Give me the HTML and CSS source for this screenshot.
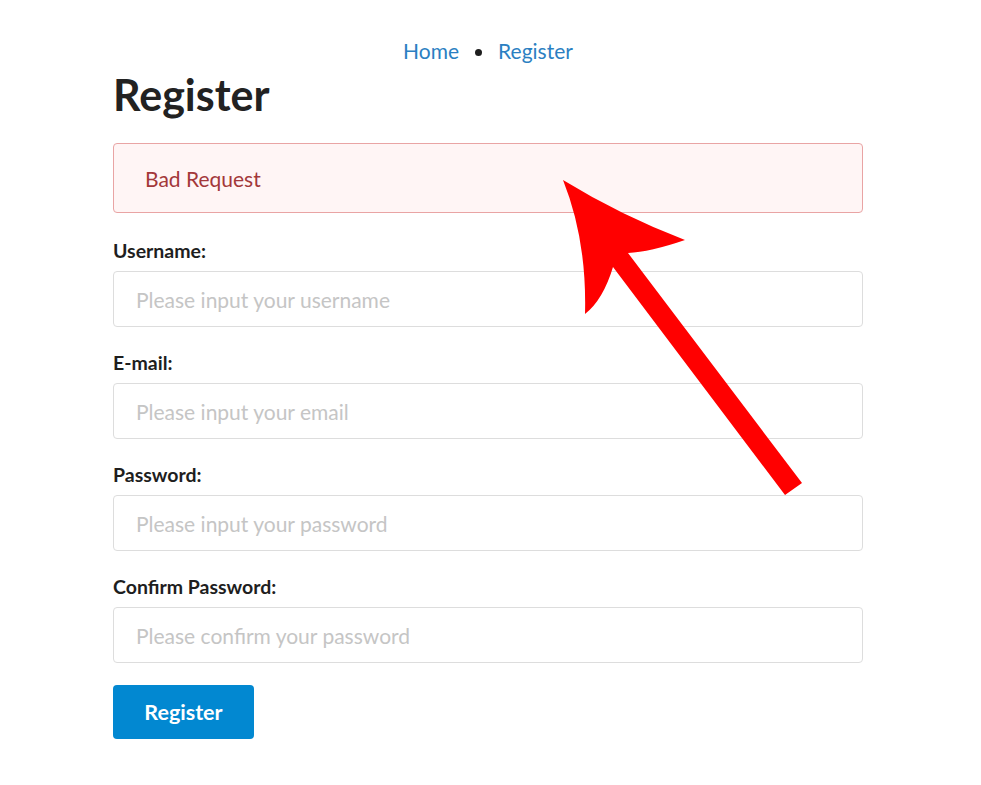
FILE: index.html
```html
<!DOCTYPE html>
<html lang="en">
<head>
<meta charset="utf-8">
<title>Register</title>
<link rel="stylesheet" href="styles.css">
</head>
<body>
<div class="page">
  <nav class="crumbs">
    <a class="crumb" href="#">Home</a>
    <span class="dot"></span>
    <a class="crumb" href="#">Register</a>
  </nav>
  <h1 class="title">Register</h1>
  <div class="alert">Bad Request</div>
  <form class="form">
    <div class="field">
      <label class="label">Username:</label>
      <input class="input" type="text" placeholder="Please input your username">
    </div>
    <div class="field">
      <label class="label">E-mail:</label>
      <input class="input" type="text" placeholder="Please input your email">
    </div>
    <div class="field">
      <label class="label">Password:</label>
      <input class="input" type="password" placeholder="Please input your password">
    </div>
    <div class="field">
      <label class="label">Confirm Password:</label>
      <input class="input" type="password" placeholder="Please confirm your password">
    </div>
    <div class="actions">
      <button class="btn" type="button">Register</button>
    </div>
  </form>
</div>
<svg class="arrow" width="981" height="785" viewBox="0 0 981 785" aria-hidden="true">
  <path d="M563 180 Q620 215 685 240 Q650 252 628 253 L802 483 L785 495 L613 267 Q603 300 585 314 Q587 240 563 180 Z" fill="#ff0000"/>
</svg>
</body>
</html>
```
FILE: styles.css
```css
html, body {
  margin: 0;
  padding: 0;
  background: #ffffff;
}
body {
  font-family: Lato, "Noto Sans", "Liberation Sans", sans-serif;
  color: #222222;
}
.page {
  width: 750px;
  margin-left: 113px;
  padding-top: 39px;
}
.crumbs {
  display: flex;
  justify-content: center;
  align-items: center;
  gap: 14px;
  font-size: 21px;
  line-height: 24px;
}
.crumb {
  color: #2b7fc2;
  text-decoration: none;
}
.dot {
  width: 7px;
  height: 7px;
  border-radius: 50%;
  background: #1e1e1e;
  margin: 2px 2px 0 2px;
}
.title {
  margin: 7px 0 0 0;
  font-size: 43px;
  line-height: 50px;
  font-weight: 700;
  color: #222222;
}
.alert {
  margin-top: 23px;
  box-sizing: border-box;
  height: 70px;
  padding: 23px 31px;
  border: 1px solid #e9a4a4;
  border-radius: 4px;
  background: #fff5f5;
  color: #a3383a;
  font-size: 21px;
  line-height: 24px;
}
.form {
  margin-top: 27px;
  display: flex;
  flex-direction: column;
  gap: 25px;
}
.field {
  display: flex;
  flex-direction: column;
  gap: 9px;
}
.label {
  font-size: 19.5px;
  line-height: 22px;
  font-weight: 700;
  color: #1e1e1e;
}
.input {
  box-sizing: border-box;
  height: 56px;
  width: 100%;
  margin: 0;
  padding: 0 22px;
  border: 1px solid #dddddd;
  border-radius: 4px;
  font-family: Lato, "Noto Sans", "Liberation Sans", sans-serif;
  font-size: 21px;
  color: #222222;
  background: #ffffff;
  outline: none;
}
.input::placeholder {
  color: #c5c5c5;
}
.actions {
  margin-top: -3px;
}
.btn {
  box-sizing: border-box;
  height: 54px;
  width: 141px;
  border: none;
  border-radius: 4px;
  background: #0288d1;
  color: #ffffff;
  font-family: Lato, "Noto Sans", "Liberation Sans", sans-serif;
  font-size: 21.5px;
  font-weight: 700;
  cursor: pointer;
}
.arrow {
  position: absolute;
  left: 0;
  top: 0;
  pointer-events: none;
}
```
